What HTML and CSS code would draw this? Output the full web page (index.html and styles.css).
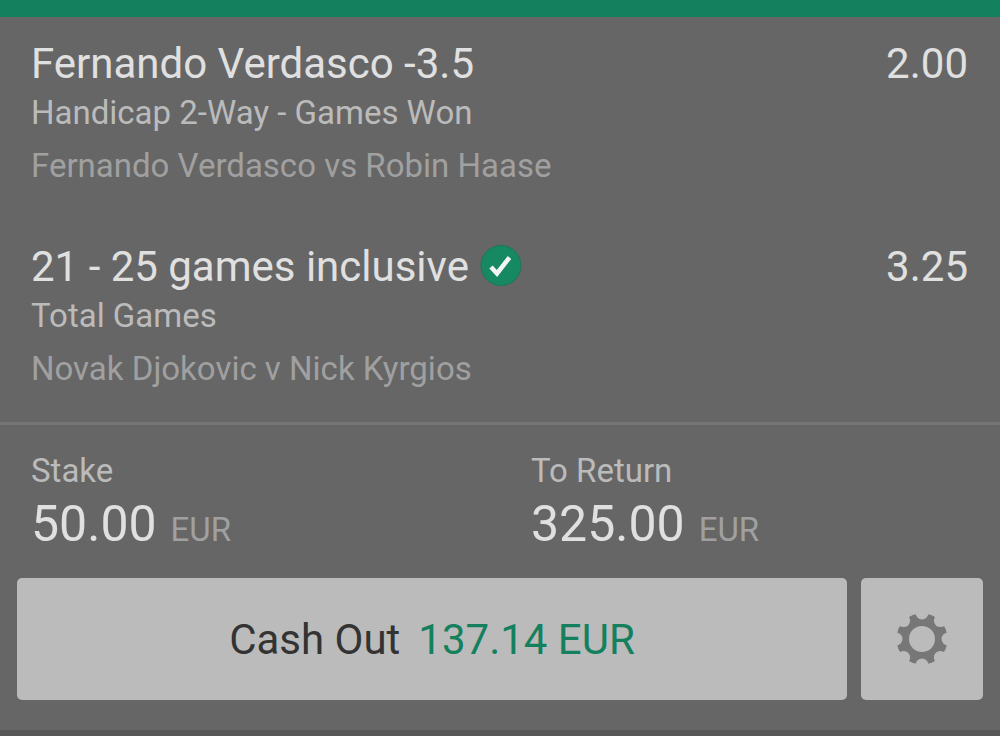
FILE: index.html
```html
<!DOCTYPE html>
<html lang="en">
<head>
<meta charset="utf-8">
<title>Open Bets</title>
<link rel="stylesheet" href="styles.css">
</head>
<body>
<main class="bet">
  <section class="selections">
    <article class="selection">
      <div class="headline"><h2 class="pick">Fernando Verdasco -3.5</h2><span class="odds">2.00</span></div>
      <p class="market">Handicap 2-Way - Games Won</p>
      <p class="fixture">Fernando Verdasco vs Robin Haase</p>
    </article>
    <article class="selection">
      <div class="headline"><h2 class="pick">21 - 25 games inclusive</h2>
        <svg class="won" viewBox="0 0 44 44" role="img" aria-label="Won"><circle cx="22" cy="20.500" r="20" fill="#168862" stroke="#1c7659" stroke-width="1"/><path d="M12 22l6 6.500L30.500 12.500" fill="none" stroke="#f4f4f4" stroke-width="4.500"/></svg>
        <span class="odds">3.25</span></div>
      <p class="market">Total Games</p>
      <p class="fixture">Novak Djokovic v Nick Kyrgios</p>
    </article>
  </section>
  <section class="totals">
    <div class="total"><p class="label">Stake</p><p class="amount">50.00 <span class="currency">EUR</span></p></div>
    <div class="total"><p class="label">To Return</p><p class="amount">325.00 <span class="currency">EUR</span></p></div>
  </section>
  <div class="actions">
    <button class="button cashout" type="button"><span>Cash Out</span><span class="value">137.14 EUR</span></button>
    <button class="button settings" type="button" aria-label="Cash out settings">
      <svg class="gear" viewBox="-26 -26 52 52" aria-hidden="true">
        <mask id="cut" maskUnits="userSpaceOnUse" x="-26" y="-26" width="52" height="52">
          <circle r="25.700" fill="#fff"/>
          <circle r="13" fill="#000"/>
          <circle cy="-26" r="6.500"/><circle cy="26" r="6.500"/><circle cx="-26" r="6.500"/><circle cx="26" r="6.500"/>
          <circle cx="18.400" cy="18.400" r="6.500"/><circle cx="-18.400" cy="18.400" r="6.500"/><circle cx="18.400" cy="-18.400" r="6.500"/><circle cx="-18.400" cy="-18.400" r="6.500"/>
        </mask>
        <circle r="26" fill="#777" mask="url(#cut)"/>
      </svg>
    </button>
  </div>
</main>
</body>
</html>
```

FILE: styles.css
```css
* { box-sizing: border-box; }
body { margin: 0; background: #666; font-family: Roboto, sans-serif; color: #e0e0e0; }
h2, p { margin: 0; font-weight: 400; }
.bet { border-top: 17px solid #15805d; border-bottom: 6px solid #585858; }
.selections { display: grid; gap: 47px; padding: 22px 32px 24px 31px; border-bottom: 3px solid #757575; }
.headline { display: flex; align-items: center; gap: 10px; height: 50px; }
.pick, .odds { font-size: 42px; line-height: 50px; }
.odds { margin-left: auto; }
.won { width: 44px; height: 44px; }
.market, .fixture, .label { font-size: 33px; }
.market { line-height: 48px; }
.fixture { line-height: 58px; }
.label { line-height: 50px; }
.market, .label { color: #bbb; }
.fixture { color: #a0a0a0; }
.totals { display: grid; grid-template-columns: 1fr 1fr; padding: 21px 0 26px; }
.total { padding-left: 31px; }
.amount { display: flex; align-items: baseline; gap: 14px; font-size: 50px; line-height: 56px; }
.currency { font-size: 33px; line-height: 40px; color: #a0a0a0; }
.actions { display: flex; gap: 14px; padding: 0 17px 30px; }
.button { height: 122px; border: 0; border-radius: 5px; background: #bbb; color: #333; font: 42px Roboto, sans-serif; display: flex; align-items: center; justify-content: center; gap: 18px; padding: 0; }
.cashout { flex: 1; }
.value { color: #15805d; }
.settings { width: 122px; }
.gear { width: 52px; height: 52px; }
```
